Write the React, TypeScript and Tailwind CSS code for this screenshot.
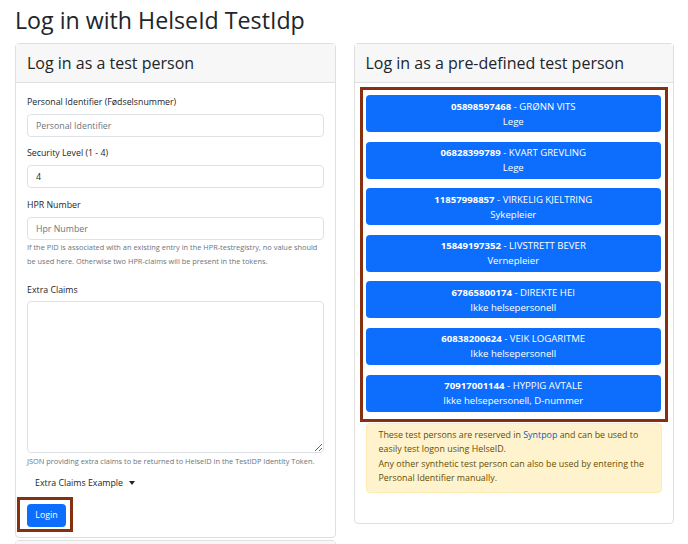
import React from "react";

type Person = {
  pid: string;
  name: string;
  role: string;
};

const persons: Person[] = [
  { pid: "05898597468", name: "GRØNN VITS", role: "Lege" },
  { pid: "06828399789", name: "KVART GREVLING", role: "Lege" },
  { pid: "11857998857", name: "VIRKELIG KJELTRING", role: "Sykepleier" },
  { pid: "15849197352", name: "LIVSTRETT BEVER", role: "Vernepleier" },
  { pid: "67865800174", name: "DIREKTE HEI", role: "Ikke helsepersonell" },
  { pid: "60838200624", name: "VEIK LOGARITME", role: "Ikke helsepersonell" },
  { pid: "70917001144", name: "HYPPIG AVTALE", role: "Ikke helsepersonell, D-nummer" },
];

const Field = ({ label, placeholder, value }: { label: string; placeholder?: string; value?: string }) => (
  <div>
    <label className="block text-[8.8px] leading-[16px] text-[#212529] mb-[4px]">{label}</label>
    <input
      className="block w-full h-[23px] px-[8px] text-[8.8px] text-[#212529] placeholder:text-[#6c757d] border border-[#dee2e6] rounded-[4px] outline-none"
      placeholder={placeholder}
      defaultValue={value}
    />
  </div>
);

export default function App() {
  return (
    <div className="min-h-screen bg-white px-[15px] pr-[14px] text-[#212529]" style={{ fontFamily: '"Open Sans", "Noto Sans", sans-serif' }}>
      <h1 className="text-[23.2px] leading-[28px] pt-[6px] pb-[9px] font-normal">Log in with HelseId TestIdp</h1>

      <div className="grid grid-cols-2 gap-[18px] items-start">
        {/* left column */}
        <div className="flex flex-col gap-[2px]">
          <div className="border border-[#dfdfdf] rounded-[4px]">
            <div className="bg-[#f7f7f7] border-b border-[#dfdfdf] h-[39px] px-[11px] flex items-center">
              <h4 className="text-[16px] leading-[20px]">Log in as a test person</h4>
            </div>
            <div className="px-[11px] pt-[11px] pb-[5px]">
              <div className="mb-[8px]">
                <Field label="Personal Identifier (Fødselsnummer)" placeholder="Personal Identifier" />
              </div>
              <div className="mb-[9px]">
                <Field label="Security Level (1 - 4)" value="4" />
              </div>
              <div>
                <Field label="HPR Number" placeholder="Hpr Number" />
                <p className="text-[7.4px] leading-[13.5px] text-[#6c757d] mt-[1px]">
                  If the PID is associated with an existing entry in the HPR-testregistry, no value should be used here. Otherwise two HPR-claims will be present in the tokens.
                </p>
              </div>
              <div className="mt-[14px]">
                <label className="block text-[8.8px] leading-[16px] mb-[3px]">Extra Claims</label>
                <textarea className="block w-full h-[152px] border border-[#dee2e6] rounded-[4px] outline-none" />
                <p className="text-[7.4px] leading-[14px] text-[#6c757d] mt-[1px]">
                  JSON providing extra claims to be returned to HelseID in the TestIDP Identity Token.
                </p>
              </div>
              <div className="mt-[7px] pl-[8px] flex items-center gap-[6px] text-[8.8px] leading-[16px]">
                <span>Extra Claims Example</span>
                <span className="border-x-[3px] border-x-transparent border-t-[4px] border-t-[#212529]" />
              </div>
              <div className="-ml-[10px] mt-[6px] inline-block border-[3px] border-[#86300f] pl-[7px] pr-[4px] pt-[4px] pb-[2px]">
                <button className="block bg-[#0d6efd] text-white text-[8.8px] leading-[15px] h-[23px] w-[39px] rounded-[4px]">Login</button>
              </div>
            </div>
          </div>
          <div className="border border-[#dfdfdf] rounded-[4px]">
            <div className="bg-[#f7f7f7] h-[39px]" />
          </div>
        </div>

        {/* right column */}
        <div className="border border-[#dfdfdf] rounded-[4px]">
          <div className="bg-[#f7f7f7] border-b border-[#dfdfdf] h-[39px] px-[11px] flex items-center">
            <h4 className="text-[16px] leading-[20px]">Log in as a pre-defined test person</h4>
          </div>
          <div className="px-[11px] pt-[4px] pb-[30px]">
            <div className="-mx-[6px] border-[3px] border-[#86300f] pl-[3px] pr-[4px] pt-[5px] pb-[7px] flex flex-col gap-[9.6px]">
              {persons.map((p) => (
                <button
                  key={p.pid}
                  className="w-full h-[37px] bg-[#0d6efd] text-white rounded-[4px] flex flex-col items-center justify-center text-[9.6px] leading-[15px]"
                >
                  <span>
                    <b className="font-bold">{p.pid}</b> - {p.name}
                  </span>
                  <span>{p.role}</span>
                </button>
              ))}
            </div>
            <div className="mt-[1px] bg-[#fff3cd] border border-[#ffecb5] rounded-[4px] text-[#664d03] text-[8.9px] leading-[14.5px] px-[12px] pt-[4px] pb-[6px]">
              These test persons are reserved in <a className="text-[#0a58ca]">Syntpop</a> and can be used to easily test logon using HelseID.
              <br />
              Any other synthetic test person can also be used by entering the Personal Identifier manually.
            </div>
          </div>
        </div>
      </div>
    </div>
  );
}
